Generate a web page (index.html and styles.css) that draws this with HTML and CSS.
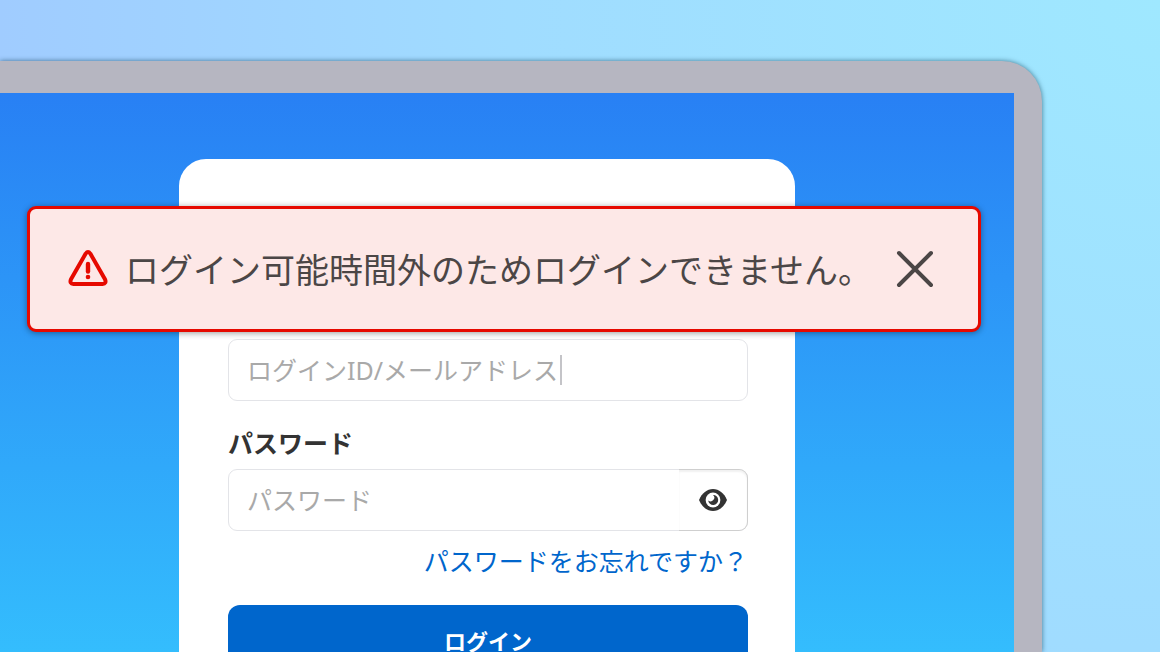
FILE: index.html
```
<!DOCTYPE html>
<html lang="ja">

<head>
    <meta charset="UTF-8">
    <meta name="viewport" content="width=device-width, initial-scale=1.0">
    <title>ログイン</title>
    <link rel="stylesheet" href="styles.css">
</head>

<body>
    <div class="device">
        <div class="screen">
            <div class="alert" role="alert">
                <svg class="alert-icon" viewBox="0 0 40 38" aria-hidden="true">
                    <path d="M17.7 3.6 Q20 0.6 22.3 3.6 L37 29.2 Q38.8 33.8 34.5 34 H5.5 Q1.2 33.8 3 29.2 Z" fill="none" stroke="#e60900" stroke-width="4" stroke-linejoin="round" />
                    <path d="M20 14 V21.5" stroke="#e60900" stroke-width="4.4" stroke-linecap="round" />
                    <circle cx="20" cy="27" r="2.3" fill="#e60900" />
                </svg>
                <p class="alert-text">ログイン可能時間外のためログインできません。</p>
                <button type="button" class="close" aria-label="閉じる">
                    <svg viewBox="0 0 38 38" aria-hidden="true">
                        <path d="M3 3 L35 35 M35 3 L3 35" stroke="#4b4646" stroke-width="4" stroke-linecap="round" />
                    </svg>
                </button>
            </div>

            <form class="card">
                <div class="field">
                    <input type="text" id="login" class="input" aria-label="ログインID/メールアドレス" placeholder="ログインID/メールアドレス">
                    <span class="caret"></span>
                </div>

                <label for="password" class="label">パスワード</label>
                <div class="field">
                    <input type="password" id="password" class="input" placeholder="パスワード">
                    <button type="button" class="eye" aria-label="パスワードを表示">
                        <svg viewBox="0 0 28 22" aria-hidden="true">
                            <path d="M0 11 C3 4 8 0 14 0 S25 4 28 11 C25 18 20 22 14 22 S3 18 0 11 Z" fill="#333" />
                            <circle cx="14" cy="11" r="7.4" fill="#fff" />
                            <path d="M14 6 A5 5 0 1 1 9.2 11.4 A3.2 3.2 0 0 0 14 6 Z" fill="#333" />
                        </svg>
                    </button>
                </div>

                <a href="#" class="forgot">パスワードをお忘れですか？</a>
                <button type="submit" class="submit">ログイン</button>
            </form>
        </div>
    </div>
</body>

</html>
```
FILE: styles.css
```
* {
    box-sizing: border-box;
}

body {
    display: flex;
    min-height: 100vh;
    margin: 0;
    padding: 61px 118px 0 0;
    overflow: hidden;
    background: radial-gradient(circle at 100% 0, #9fe8ff, #a0dcff 650px, #a0ccff 1160px);
    font-family: "Noto Sans", "Noto Sans CJK JP", sans-serif;
    color: #333;
}

.device {
    display: flex;
    flex: 1;
    padding: 32px 28px 0 0;
    border-radius: 0 40px 0 0;
    background-color: #b6b6c1;
    box-shadow: 0 0 5px rgba(0, 50, 70, 0.6);
}

.screen {
    position: relative;
    flex: 1;
    height: calc(100vh - 93px);
    padding: 66px 219px 0 179px;
    background: linear-gradient(#2880f4, #34bdfd);
}

.alert {
    position: absolute;
    top: 113px;
    left: 27px;
    right: 33px;
    display: flex;
    align-items: center;
    padding: 34px 44px 34px 38px;
    border: 3px solid #e60900;
    border-radius: 9px;
    background-color: #fde8e7;
    box-shadow: 0 1px 6px rgba(0, 0, 0, 0.4);
}

.alert-icon {
    flex: none;
    width: 40px;
    height: 38px;
}

.alert-text {
    flex: 1;
    margin: 0 0 0 17px;
    font-family: "Noto Sans CJK JP", sans-serif;
    font-size: 34px;
    font-weight: 400;
    line-height: 52px;
    white-space: nowrap;
    color: #4b4646;
}

.close {
    width: 38px;
    height: 38px;
    padding: 0;
    border: none;
    background: none;
    cursor: pointer;
}

.close svg {
    display: block;
}

.card {
    display: flex;
    flex-direction: column;
    height: 100%;
    padding: 180px 47px 0 49px;
    border-radius: 27px 27px 0 0;
    background-color: #fff;
}

.field {
    position: relative;
    display: flex;
}

.input {
    flex: 1;
    min-width: 0;
    height: 62px;
    padding: 0 18px;
    border: 1px solid #e3e4e8;
    border-radius: 9px;
    background-color: #fff;
    font-family: inherit;
    font-size: 25px;
}

.input::placeholder {
    color: #a9a9a9;
    opacity: 1;
}

.caret {
    position: absolute;
    top: 16px;
    left: 332px;
    width: 2px;
    height: 30px;
    background-color: #c4c4c8;
}

.label {
    margin: 24px 0 8px;
    font-size: 25px;
    font-weight: 700;
    line-height: 36px;
}

.eye {
    position: absolute;
    top: 0;
    right: 0;
    display: flex;
    align-items: center;
    justify-content: center;
    width: 69px;
    height: 62px;
    padding: 0;
    border: 1px solid #cfcfcf;
    border-left: none;
    border-radius: 0 9px 9px 0;
    background-color: #fff;
    box-shadow: inset 0 2px 2px rgba(0, 0, 0, 0.06);
    cursor: pointer;
}

.eye svg {
    width: 28px;
    height: 22px;
}

.forgot {
    align-self: flex-end;
    margin: 12px 0 25px;
    font-size: 25px;
    line-height: 37px;
    text-decoration: none;
    color: #0066cc;
}

.submit {
    flex: none;
    height: 72px;
    border: none;
    border-radius: 12px;
    background-color: #0066cc;
    font-family: inherit;
    font-size: 22px;
    font-weight: 700;
    line-height: 22px;
    color: #fff;
    cursor: pointer;
}
```
